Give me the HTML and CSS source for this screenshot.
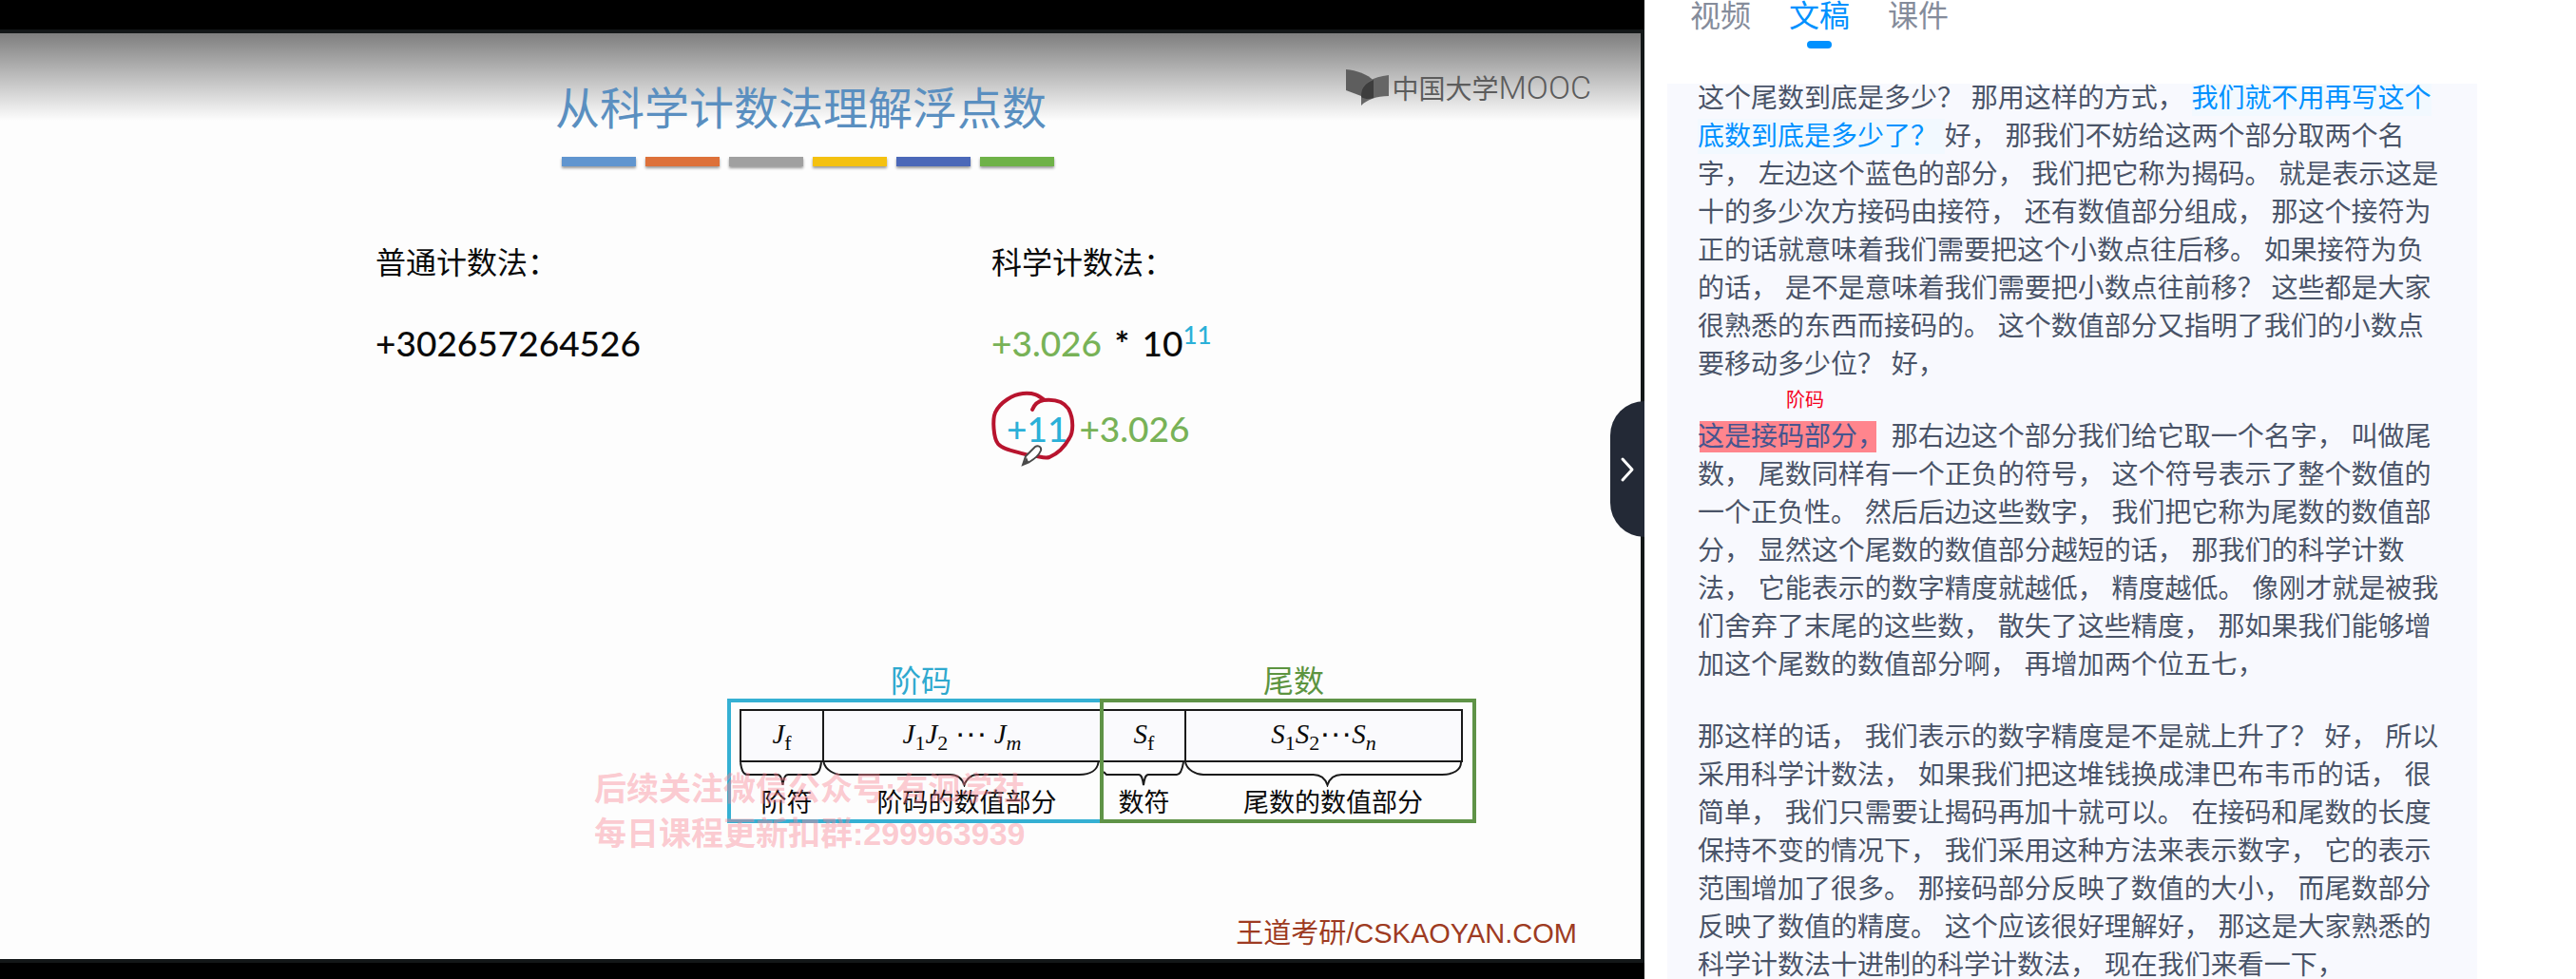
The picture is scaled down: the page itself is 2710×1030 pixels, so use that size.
FILE: index.html
```html
<!DOCTYPE html>
<html lang="zh-CN">
<head>
<meta charset="utf-8">
<title>从科学计数法理解浮点数</title>
<link rel="stylesheet" href="styles.css">
</head>
<body>
<div class="page">
  <main class="video">
    <section class="slide">
      <div class="brand">
        <svg class="brand-icon" width="46" height="38" viewBox="0 0 46 38" aria-hidden="true">
          <path d="M0 0C11 1 23 5 29 12L29 30L16 28L0 22Z" fill="#5e5e5e"/>
          <path d="M16 38V24C17 14 28 8 45 6V28C32 28 22 32 16 38Z" fill="#666"/>
          <path d="M29 11C20 15 16 19 16 28V29C21 32 25 31 29 30Z" fill="#3d3d3d"/>
        </svg>
        <span class="brand-cn">中国大学</span><span class="brand-en">MOOC</span>
      </div>

      <h1 class="title">从科学计数法理解浮点数</h1>
      <div class="bars">
        <span class="bar blue"></span><span class="bar orange"></span><span class="bar grey"></span><span class="bar yellow"></span><span class="bar indigo"></span><span class="bar green"></span>
      </div>

      <div class="compare">
        <div class="method">
          <h2 class="method-name">普通计数法：</h2>
          <p class="number">+302657264526</p>
        </div>
        <div class="method">
          <h2 class="method-name">科学计数法：</h2>
          <p class="number"><span class="mantissa">+3.026</span> <b class="times">*</b> 10<sup class="exponent">11</sup></p>
          <p class="number pair"><span class="exponent">+11</span><span class="mantissa">+3.026</span>
            <svg class="pen" width="90" height="90" viewBox="0 0 90 90" aria-hidden="true">
              <path d="M44 26C46 21 50 17 56 16C66 15 76 16 82 25C88 36 87 50 83 56C77 67 69 73 62 76C56 78 50 74 40 74C28 70 14 69 8 62C3 56 2 36 5 29C10 18 24 10 34 9C46 8 50 11 57 16" fill="none" stroke="#b8142e" stroke-width="4" stroke-linecap="round"/>
              <path d="M34 84L37 75L47 65C50 63 54 65 53 69C51 74 46 78 41 81Z" fill="#fff" stroke="#4a4a4a" stroke-width="2"/>
              <path d="M34 84L38 76L40 81Z" fill="#4a4a4a"/>
            </svg>
          </p>
        </div>
      </div>

      <div class="format">
        <div class="part exp">
          <div class="part-name">阶码</div>
          <div class="frame">
            <div class="field sign">
              <div class="cell"><i>J</i><sub>f</sub></div>
              <svg class="brace" height="26" viewBox="0 0 88 26" aria-hidden="true"><path d="M1 0C2 8 4 13 8 13H40C44 13 45 17 46 24C47 17 48 13 52 13H79C84 13 86 8 87 0"/></svg>
              <div class="field-name">阶符</div>
            </div>
            <div class="field">
              <div class="cell"><i>J</i><sub>1</sub><i>J</i><sub>2</sub> <span class="dots">···</span> <i>J</i><sub><i>m</i></sub></div>
              <svg class="brace" height="26" viewBox="0 0 291 26" aria-hidden="true"><path d="M1 0C3 8 12 13 20 13H134C142 13 147 18 149 24C151 18 156 13 162 13H270C282 13 289 8 290 0"/></svg>
              <div class="field-name">阶码的数值部分</div>
            </div>
          </div>
        </div>
        <div class="part man">
          <div class="part-name">尾数</div>
          <div class="frame">
            <div class="field sign">
              <div class="cell"><i>S</i><sub>f</sub></div>
              <svg class="brace" height="26" viewBox="0 0 85 26" aria-hidden="true"><path d="M0 10L3 13H37C40 13 41 17 42 24C43 17 44 13 47 13H77C81 13 83 6 84 0"/></svg>
              <div class="field-name">数符</div>
            </div>
            <div class="field">
              <div class="cell"><i>S</i><sub>1</sub><i>S</i><sub>2</sub><span class="dots">···</span><i>S</i><sub><i>n</i></sub></div>
              <svg class="brace" height="26" viewBox="0 0 294 26" aria-hidden="true"><path d="M1 0C3 8 12 13 20 13H136C144 13 149 18 151 24C153 18 158 13 166 13H272C284 13 292 8 292 0"/></svg>
              <div class="field-name">尾数的数值部分</div>
            </div>
          </div>
        </div>
        <p class="watermark">后续关注微信公众号:有洄学社<br>每日课程更新扣群:299963939</p>
      </div>

      <footer class="credit">王道考研/CSKAOYAN.COM</footer>
    </section>
    <button class="collapse" type="button" aria-label="收起">
      <svg width="16" height="28" viewBox="0 0 16 28" aria-hidden="true"><path d="M3 3L13 14L3 25" fill="none" stroke="#fff" stroke-width="3" stroke-linecap="round" stroke-linejoin="round"/></svg>
    </button>
  </main>

  <aside class="side">
    <nav class="tabs">
      <a class="tab" href="#video">视频</a>
      <a class="tab active" href="#script">文稿</a>
      <a class="tab" href="#slides">课件</a>
    </nav>
    <article class="script" id="script">
      <p class="para">这个尾数到底是多少？ 那用这样的方式， <span class="current">我们就不用再写这个底数到底是多少了？ </span>好， 那我们不妨给这两个部分取两个名字， 左边这个蓝色的部分， 我们把它称为揭码。 就是表示这是十的多少次方接码由接符， 还有数值部分组成， 那这个接符为正的话就意味着我们需要把这个小数点往后移。 如果接符为负的话， 是不是意味着我们需要把小数点往前移？ 这些都是大家很熟悉的东西而接码的。 这个数值部分又指明了我们的小数点要移动多少位？ 好，</p>
      <p class="para"><mark class="marked">这是接码部分，<span class="note">阶码</span></mark> 那右边这个部分我们给它取一个名字， 叫做尾数， 尾数同样有一个正负的符号， 这个符号表示了整个数值的一个正负性。 然后后边这些数字， 我们把它称为尾数的数值部分， 显然这个尾数的数值部分越短的话， 那我们的科学计数法， 它能表示的数字精度就越低， 精度越低。 像刚才就是被我们舍弃了末尾的这些数， 散失了这些精度， 那如果我们能够增加这个尾数的数值部分啊， 再增加两个位五七，</p>
      <p class="para">那这样的话， 我们表示的数字精度是不是就上升了？ 好， 所以采用科学计数法， 如果我们把这堆钱换成津巴布韦币的话， 很简单， 我们只需要让揭码再加十就可以。 在接码和尾数的长度保持不变的情况下， 我们采用这种方法来表示数字， 它的表示范围增加了很多。 那接码部分反映了数值的大小， 而尾数部分反映了数值的精度。 这个应该很好理解好， 那这是大家熟悉的科学计数法十进制的科学计数法， 现在我们来看一下，</p>
    </article>
  </aside>
</div>
</body>
</html>
```
FILE: styles.css
```css
* {
  box-sizing: border-box;
}

body,
h1,
h2,
p {
  margin: 0;
}

body {
  background: #fff;
  font-family: "Liberation Sans", "Noto Sans CJK SC", sans-serif;
  text-spacing-trim: space-all;
}

.page {
  display: grid;
  grid-template-columns: 173fr 98fr;
  height: 100vh;
  overflow: hidden;
}

/* video frame */

.video {
  position: relative;
  display: flex;
  min-width: 0;
  padding: 31px 0 17px;
  background: #000;
}

.slide {
  position: relative;
  flex: 1;
  display: flex;
  flex-direction: column;
  border: solid #131718;
  border-width: 4px 4px 4px 0;
  padding: 50px 0 7px;
  background: linear-gradient(rgba(0, 0, 0, 0.5), rgba(0, 0, 0, 0) 92px) #fdfdfd;
  color: #0a0a0a;
}

.brand {
  position: absolute;
  top: 38px;
  right: 52px;
  display: flex;
  align-items: center;
  color: #5c5c5c;
  line-height: 38px;
}

.brand-icon {
  margin-right: 2px;
}

.brand-cn {
  font-family: "Noto Sans CJK SC", sans-serif;
  font-size: 28px;
}

.brand-en {
  font-family: Roboto, sans-serif;
  font-size: 34px;
  font-weight: 300;
}

.title {
  padding-left: 584px;
  color: #5a8fc0;
  font-size: 47px;
  font-weight: 400;
  line-height: 60px;
}

.bars {
  display: flex;
  gap: 10px;
  margin-top: 20px;
  padding-left: 591px;
}

.bar {
  width: 78px;
  height: 10px;
  box-shadow: 0 2px 3px rgba(0, 0, 0, 0.4);
}

.bar.blue { background: #6095cf; }
.bar.orange { background: #dd713a; }
.bar.grey { background: #a0a0a0; }
.bar.yellow { background: #f4c110; }
.bar.indigo { background: #4b68b8; }
.bar.green { background: #6fb248; }

.compare {
  display: grid;
  grid-template-columns: 648px 1fr;
  margin-top: 82px;
  padding-left: 395px;
}

.method {
  display: flex;
  flex-direction: column;
  gap: 40px;
}

.method-name {
  font-size: 32px;
  font-weight: 400;
  line-height: 40px;
}

.number {
  font-family: Lato, sans-serif;
  font-size: 37px;
  font-weight: 500;
  line-height: 48px;
  height: 50px;
}

.times {
  padding: 0 4px;
}

.mantissa {
  color: #78b257;
}

.exponent {
  color: #2bb0d8;
}

sup.exponent {
  font-size: 26px;
  line-height: 0;
}

.pair {
  position: relative;
  display: flex;
  gap: 12px;
  padding-left: 16px;
}

.pen {
  position: absolute;
  top: -22px;
  left: -1px;
}

/* number format diagram */

.format {
  position: relative;
  display: flex;
  margin-top: auto;
  padding-left: 765px;
}

.part {
  width: 396px;
}

.part-name {
  padding-left: 12px;
  font-size: 32px;
  line-height: 36px;
  text-align: center;
}

.exp .part-name { color: #2fa9cf; }
.man .part-name { color: #5c9440; }

.frame {
  display: flex;
  height: 131px;
  border: 4px solid;
  padding-top: 7px;
}

.exp .frame {
  border-color: #35b0d3;
  padding-left: 9px;
}

.man .frame {
  border-color: #5f9347;
  padding-right: 10px;
}

.man {
  margin-left: -4px;
}

.field {
  flex: 1;
  text-align: center;
}

.field.sign {
  flex: 0 0 87px;
}

.man .field.sign {
  flex-basis: 85px;
}

.cell {
  height: 56px;
  border: solid #1a1a1a;
  border-width: 2px 0 2px 2px;
  background: #fafafd;
  font-family: "Liberation Serif", serif;
  font-size: 29px;
  line-height: 48px;
}

.cell sub {
  font-size: 22px;
  line-height: 0;
}

.dots {
  font-family: "Liberation Sans", sans-serif;
  font-size: 34px;
  line-height: 0;
}

.man .sign .cell {
  border-left-width: 0;
}

.man .field:last-child .cell {
  border-right-width: 2px;
}

.brace {
  display: block;
  width: 100%;
  fill: none;
  stroke: #1a1a1a;
  stroke-width: 2;
}

.field-name {
  padding-left: 12px;
  font-size: 27px;
  line-height: 34px;
}

.man .field-name {
  padding-left: 20px;
}

.man .sign .field-name {
  padding-left: 0;
}

.watermark {
  position: absolute;
  top: 108px;
  left: 625px;
  color: rgba(250, 130, 145, 0.42);
  font-size: 34px;
  font-weight: 700;
  line-height: 47px;
}

.credit {
  margin-top: 96px;
  padding-right: 67px;
  color: #9e3b22;
  font-size: 29px;
  line-height: 40px;
  text-align: right;
}

.collapse {
  position: absolute;
  top: 422px;
  right: 0;
  display: flex;
  align-items: center;
  justify-content: center;
  width: 36px;
  height: 143px;
  border: 0;
  border-radius: 36px 0 0 36px;
  padding: 0;
  background: #232936;
}

/* transcript column */

.side {
  display: flex;
  flex-direction: column;
  min-width: 0;
  min-height: 0;
  padding: 0 104px 0 24px;
}

.tabs {
  display: flex;
  gap: 40px;
  height: 88px;
  padding-left: 24px;
}

.tab {
  display: flex;
  flex-direction: column;
  align-items: center;
  gap: 8px;
  color: #858c9b;
  font-size: 32px;
  line-height: 35px;
  text-decoration: none;
}

.tab.active {
  color: #0091ff;
}

.tab.active::after {
  content: "";
  width: 26px;
  height: 8px;
  border-radius: 4px;
  background: #0091ff;
}

.script {
  display: flex;
  flex: 1;
  flex-direction: column;
  gap: 36px;
  min-height: 0;
  overflow: hidden;
  padding: 0 32px;
  background: #f8f9fe;
  color: #4a5468;
  font-size: 28px;
  line-height: 40px;
}

.para:first-child {
  margin-top: -4px;
}

.current {
  background: #f2f9ff;
  color: #0091ff;
  padding: 3px 0;
}

.marked {
  position: relative;
  padding: 1px 0;
  background: linear-gradient(#ff858d, #ff858d) no-repeat 2px 0 / 186px 100%;
  color: #45558f;
}

.note {
  position: absolute;
  top: -36px;
  left: 93px;
  color: #f5001d;
  font-size: 20px;
  line-height: 28px;
}
```
